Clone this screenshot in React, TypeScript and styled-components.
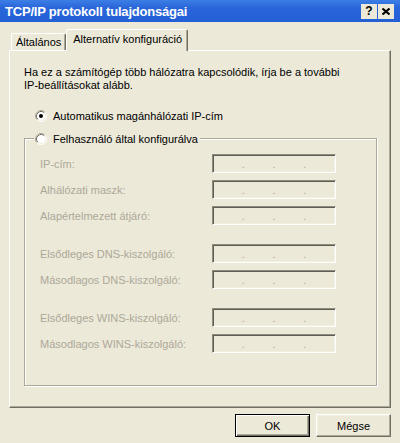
import styled, { createGlobalStyle } from "styled-components";

const GlobalStyle = createGlobalStyle`
  html, body {
    margin: 0;
    padding: 0;
    background: #ece9d8;
  }
  body {
    font-family: "Liberation Sans", Arial, sans-serif;
    font-size: 11px;
    color: #000;
  }
`;

const Window = styled.div`
    width: 400px;
    height: 443px;
    display: flex;
    flex-direction: column;
    background: #ece9d8;
    overflow: hidden;
`;

const TitleBar = styled.div`
    height: 22px;
    flex: none;
    display: flex;
    align-items: center;
    justify-content: space-between;
    padding: 0 6px 0 5px;
    background: linear-gradient(#3d7ee6, #2a66da 35%, #2360d6);
`;

const Title = styled.span`
    color: #fff;
    font-weight: bold;
    font-size: 13px;
    letter-spacing: -0.2px;
`;

const CaptionButtons = styled.div`
    display: flex;
    gap: 1px;
`;

const CaptionButton = styled.div`
    width: 16px;
    height: 15px;
    display: flex;
    align-items: center;
    justify-content: center;
    background: #ece9d8;
    font-weight: bold;
    font-size: 12px;
`;

const TabStrip = styled.div`
    display: flex;
    align-items: flex-end;
    height: 21px;
    margin: 7px 9px 0;
`;

const Tab = styled.div<{ $active?: boolean }>`
    position: relative;
    z-index: 2;
    box-sizing: border-box;
    height: ${p => p.$active ? 22 : 17}px;
    margin-left: ${p => p.$active ? 0 : 2}px;
    margin-bottom: ${p => p.$active ? -1 : 0}px;
    padding: ${p => p.$active ? "3px 5px 0 6px" : "2px 4px 0"};
    background: #ece9d8;
    border-top: 1px solid #fff;
    border-left: 1px solid #fff;
    border-right: 1px solid #716f64;
    border-radius: 2px 2px 0 0;
    box-shadow: inset -1px 0 0 #aca899;
    white-space: nowrap;
`;

const Panel = styled.div`
    margin: 0 9px;
    height: 358px;
    box-sizing: border-box;
    border-top: 1px solid #fff;
    border-left: 1px solid #fff;
    border-right: 1px solid #716f64;
    border-bottom: 1px solid #716f64;
    box-shadow: inset -1px -1px 0 #aca899;
    padding: 15px 13px 0 14px;
`;

const Intro = styled.p`
    margin: 0;
    line-height: 13px;
    width: 330px;
`;

const RadioRow = styled.div`
    display: flex;
    align-items: center;
    gap: 6px;
    height: 13px;
    padding-left: 11px;
    margin-top: 17px;
`;

const GroupBox = styled.fieldset`
    margin: 10px 0 0;
    padding: 9px 0 32px 15px;
    border: 1px solid #aca899;
    box-shadow: inset 1px 1px 0 #fff, 1px 1px 0 #fff;
`;

const GroupLegend = styled.legend`
    display: flex;
    align-items: center;
    gap: 6px;
    height: 13px;
    margin-left: -6px;
    padding: 0 2px 0 1px;
    background: #ece9d8;
`;

const Section = styled.div`
    display: flex;
    flex-direction: column;
    gap: 7px;
    & + & {
        margin-top: 19px;
    }
`;

const Field = styled.div`
    display: grid;
    grid-template-columns: 172px 124px;
    align-items: center;
    height: 19px;
`;

const FieldLabel = styled.span`
    color: #aca899;
`;

const IpBox = styled.div`
    box-sizing: border-box;
    height: 19px;
    display: flex;
    align-items: center;
    padding: 0 1px;
    border-style: solid;
    border-width: 1px;
    border-color: #8d8a7e #fff #fff #8d8a7e;
    box-shadow: inset 1px 1px 0 #5f5d54, inset -1px -1px 0 #f1efe2;
`;

const Octet = styled.span`
    flex: 1;
`;

const Dot = styled.span`
    width: 3px;
    text-align: center;
    color: #aca899;
    line-height: 17px;
    padding-top: 2px;
`;

const Footer = styled.div`
    display: flex;
    justify-content: flex-end;
    gap: 6px;
    margin: 6px 9px 0;
`;

const Button = styled.button<{ $default?: boolean }>`
    width: 75px;
    height: 23px;
    padding: 0;
    font: inherit;
    color: #000;
    background: #ece9d8;
    border: 1px solid;
    border-color: ${p => p.$default ? "#000" : "#fff #716f64 #716f64 #fff"};
    box-shadow: ${p => p.$default
        ? "inset 1px 1px 0 #fff, inset -1px -1px 0 #716f64, inset -2px -2px 0 #aca899"
        : "inset -1px -1px 0 #aca899, inset 1px 1px 0 #f1efe2"};
`;

function Radio({ checked }: { checked?: boolean }) {
    return (
        <svg width="12" height="12" viewBox="0 0 12 12">
            <circle cx="6" cy="6" r="5" fill="#fff" />
            <path d="M2.11 9.89 A5.5 5.5 0 0 1 9.89 2.11" fill="none" stroke="#aca899" />
            <path d="M9.89 2.11 A5.5 5.5 0 0 1 2.11 9.89" fill="none" stroke="#fff" />
            <path d="M2.82 9.18 A4.5 4.5 0 0 1 9.18 2.82" fill="none" stroke="#716f64" />
            <path d="M9.18 2.82 A4.5 4.5 0 0 1 2.82 9.18" fill="none" stroke="#f1efe2" />
            {checked && <circle cx="6" cy="6" r="2" fill="#000" />}
        </svg>
    );
}

function IpField({ label }: { label: string }) {
    return (
        <Field>
            <FieldLabel>{label}</FieldLabel>
            <IpBox>
                <Octet />
                <Dot>.</Dot>
                <Octet />
                <Dot>.</Dot>
                <Octet />
                <Dot>.</Dot>
                <Octet />
            </IpBox>
        </Field>
    );
}

export default function App() {
    return (
        <Window>
            <GlobalStyle />
            <TitleBar>
                <Title>TCP/IP protokoll tulajdonságai</Title>
                <CaptionButtons>
                    <CaptionButton>?</CaptionButton>
                    <CaptionButton>
                        <svg width="8" height="7" viewBox="0 0 8 7">
                            <path d="M0.5 0.5 L7.5 6.5 M7.5 0.5 L0.5 6.5" stroke="#000" strokeWidth="2" />
                        </svg>
                    </CaptionButton>
                </CaptionButtons>
            </TitleBar>
            <TabStrip>
                <Tab>Általános</Tab>
                <Tab $active>Alternatív konfiguráció</Tab>
            </TabStrip>
            <Panel>
                <Intro>
                    Ha ez a számítógép több hálózatra kapcsolódik, írja be a további
                    IP-beállításokat alább.
                </Intro>
                <RadioRow>
                    <Radio checked />
                    Automatikus magánhálózati IP-cím
                </RadioRow>
                <GroupBox>
                    <GroupLegend>
                        <Radio />
                        Felhasználó által konfigurálva
                    </GroupLegend>
                    <Section>
                        <IpField label="IP-cím:" />
                        <IpField label="Alhálózati maszk:" />
                        <IpField label="Alapértelmezett átjáró:" />
                    </Section>
                    <Section>
                        <IpField label="Elsődleges DNS-kiszolgáló:" />
                        <IpField label="Másodlagos DNS-kiszolgáló:" />
                    </Section>
                    <Section>
                        <IpField label="Elsődleges WINS-kiszolgáló:" />
                        <IpField label="Másodlagos WINS-kiszolgáló:" />
                    </Section>
                </GroupBox>
            </Panel>
            <Footer>
                <Button $default>OK</Button>
                <Button>Mégse</Button>
            </Footer>
        </Window>
    );
}
